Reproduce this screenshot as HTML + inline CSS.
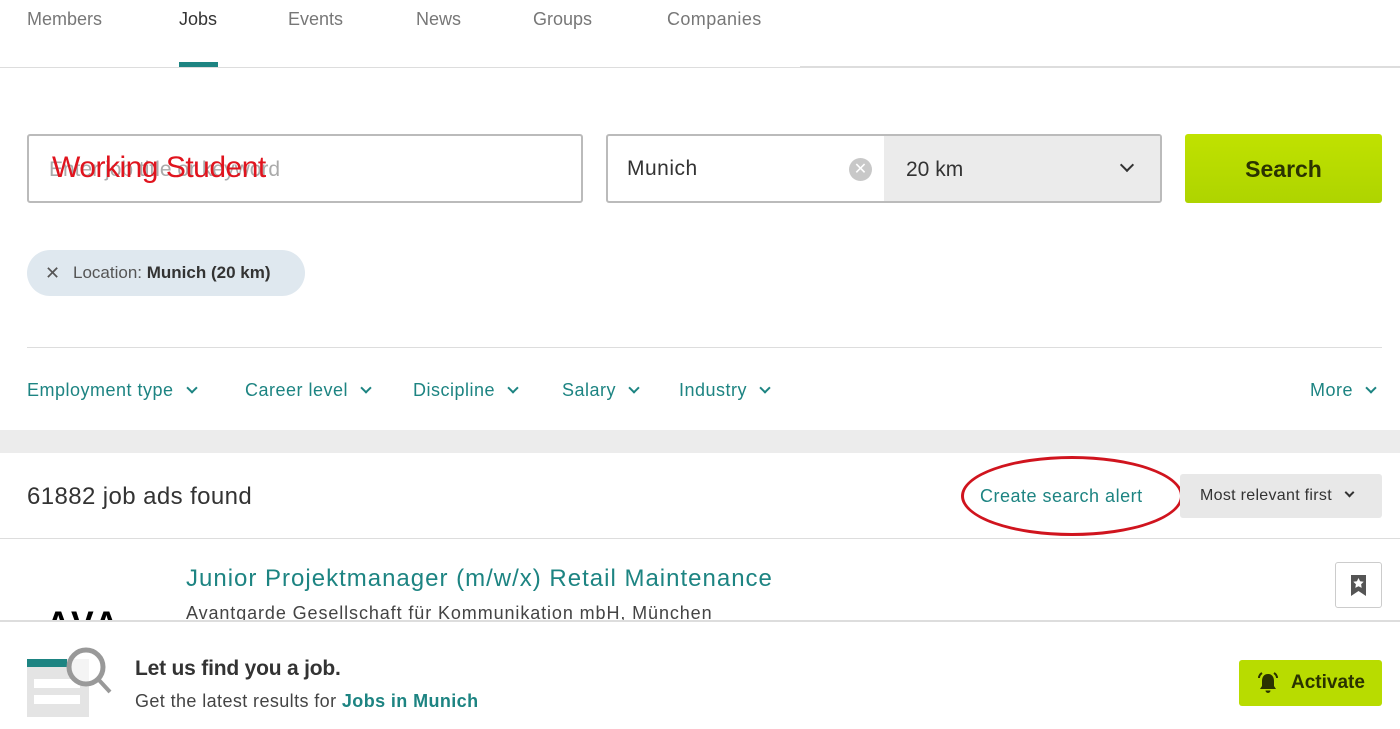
<!DOCTYPE html>
<html><head><meta charset="utf-8"><style>
*{margin:0;padding:0;box-sizing:border-box}
body{width:1400px;height:729px;overflow:hidden;background:#fff;font-family:"Liberation Sans",sans-serif;color:#333;position:relative}
.a{position:absolute;white-space:nowrap}
.tab{top:9px;font-size:18px;color:#777}
.teal{color:#1d8482}
.f{top:380px;font-size:18px;color:#1d8482}
.chev{display:inline-block;width:8px;height:8px;border-right:2px solid currentColor;border-bottom:2px solid currentColor;transform:rotate(45deg);margin-left:14px;position:relative;top:-4px}
</style></head><body>
<div class="a tab" style="left:27px">Members</div>
<div class="a tab" style="left:179px;color:#333">Jobs</div>
<div class="a" style="left:179px;top:62px;width:39px;height:5px;background:#1d8482"></div>
<div class="a tab" style="left:288px">Events</div>
<div class="a tab" style="left:416px">News</div>
<div class="a tab" style="left:533px">Groups</div>
<div class="a tab" style="left:667px;letter-spacing:.4px">Companies</div>
<div class="a" style="left:0;top:67px;width:800px;height:1px;background:#ddd"></div>
<div class="a" style="left:800px;top:66px;width:600px;height:2px;background:#ddd"></div>

<div class="a" style="left:27px;top:134px;width:556px;height:69px;border:2px solid #bbb;border-radius:3px"></div>
<div class="a" style="left:49px;top:158px;font-size:21px;color:#aaa">Enter job title or keyword</div>
<div class="a" style="left:52px;top:151px;font-size:30px;color:#e0141e;letter-spacing:-.5px">Working Student</div>

<div class="a" style="left:606px;top:134px;width:556px;height:69px;border:2px solid #bbb;border-radius:3px;overflow:hidden">
  <div class="a" style="left:276px;top:0;width:278px;height:67px;background:#ebebeb"></div>
</div>
<div class="a" style="left:627px;top:157px;font-size:21px;color:#333;letter-spacing:.5px">Munich</div>
<div class="a" style="left:849px;top:158px;width:23px;height:23px;border-radius:50%;background:#c8c8c8;color:#fff;font-size:16px;text-align:center;line-height:23px">✕</div>
<div class="a" style="left:906px;top:158px;font-size:21px;color:#333">20 km</div>
<div class="a" style="left:1122px;top:160px;width:10px;height:10px;border-right:2px solid #333;border-bottom:2px solid #333;transform:rotate(45deg)"></div>
<div class="a" style="left:1185px;top:134px;width:197px;height:69px;background:linear-gradient(#c0e200,#aed400);border-radius:3px;text-align:center;line-height:71px;font-size:23px;font-weight:bold;color:#2a3300">Search</div>

<div class="a" style="left:27px;top:250px;width:278px;height:46px;background:#dfe8ef;border-radius:23px"></div>
<div class="a" style="left:45px;top:263px;font-size:18px;color:#555">✕</div>
<div class="a" style="left:73px;top:263px;font-size:17px;color:#555">Location: <b style="color:#333">Munich (20 km)</b></div>

<div class="a" style="left:27px;top:347px;width:1355px;height:1px;background:#ddd"></div>
<div class="a f" style="left:27px;letter-spacing:.5px">Employment type<span class="chev"></span></div>
<div class="a f" style="left:245px;letter-spacing:.5px">Career level<span class="chev"></span></div>
<div class="a f" style="left:413px;letter-spacing:.5px">Discipline<span class="chev"></span></div>
<div class="a f" style="left:562px;letter-spacing:.5px">Salary<span class="chev"></span></div>
<div class="a f" style="left:679px;letter-spacing:.5px">Industry<span class="chev"></span></div>
<div class="a f" style="left:1310px;letter-spacing:.5px">More<span class="chev"></span></div>

<div class="a" style="left:0;top:430px;width:1400px;height:23px;background:#ececec"></div>
<div class="a" style="left:27px;top:483px;font-size:24px;color:#333;letter-spacing:.4px">61882 job ads found</div>
<div class="a" style="left:980px;top:486px;font-size:18px;color:#1d8482;letter-spacing:.5px">Create search alert</div>
<div class="a" style="left:961px;top:456px;width:222px;height:80px;border:3px solid #d0141e;border-radius:50%"></div>
<div class="a" style="left:1180px;top:474px;width:202px;height:44px;background:#e8e8e8;border-radius:3px"></div>
<div class="a" style="left:1200px;top:487px;font-size:16px;color:#333;letter-spacing:.3px">Most relevant first<span class="chev" style="width:7px;height:7px;margin-left:14px"></span></div>
<div class="a" style="left:0;top:538px;width:1400px;height:1px;background:#ddd"></div>

<div class="a" style="left:186px;top:565px;font-size:24px;color:#1d8482;letter-spacing:1px">Junior Projektmanager (m/w/x) Retail Maintenance</div>
<div class="a" style="left:186px;top:603px;font-size:18px;color:#444;letter-spacing:.9px">Avantgarde Gesellschaft für Kommunikation mbH, München</div>
<div class="a" style="left:46px;top:602px;font-size:34px;font-weight:bold;color:#000;letter-spacing:3px;overflow:hidden;height:18px;line-height:44px">AVA</div>
<div class="a" style="left:1335px;top:562px;width:47px;height:46px;border:1px solid #ccc;border-radius:3px;background:#fff">
<svg width="45" height="44" viewBox="0 0 45 44"><path d="M15 12h15v21l-7.5-5-7.5 5z" fill="#555"/><path d="M22.5 15l1.6 3.3 3.6.5-2.6 2.5.6 3.6-3.2-1.7-3.2 1.7.6-3.6-2.6-2.5 3.6-.5z" fill="#fff"/></svg></div>

<div class="a" style="left:0;top:620px;width:1400px;height:109px;background:#fff;border-top:2px solid #ddd"></div>
<svg class="a" style="left:24px;top:645px" width="90" height="75" viewBox="0 0 90 75">
<rect x="3" y="14" width="62" height="58" fill="#e4e4e4"/>
<rect x="3" y="14" width="40" height="8" fill="#1d8482"/>
<rect x="10" y="34" width="46" height="9" fill="#fff"/><rect x="10" y="50" width="46" height="9" fill="#fff"/>
<line x1="74" y1="34" x2="86" y2="47" stroke="#999" stroke-width="4"/>
<circle cx="62" cy="22" r="17" fill="#fff" fill-opacity=".6" stroke="#999" stroke-width="5"/>
</svg>
<div class="a" style="left:135px;top:657px;font-size:21px;color:#333;font-weight:bold;letter-spacing:-.2px">Let us find you a job.</div>
<div class="a" style="left:135px;top:691px;font-size:18px;color:#444;letter-spacing:.4px">Get the latest results for <span class="teal" style="font-weight:bold">Jobs in Munich</span></div>
<div class="a" style="left:1239px;top:660px;width:143px;height:46px;background:#b8dc00;border-radius:3px"></div>
<svg class="a" style="left:1256px;top:671px" width="24" height="24" viewBox="0 0 24 24"><path d="M12 3c-4 0-6 3-6 7v5l-2 3h16l-2-3v-5c0-4-2-7-6-7z M9.5 19.5a2.5 2.5 0 005 0z" fill="#2a3300"/><path d="M3 7q0-3 3-5M21 7q0-3-3-5" stroke="#2a3300" stroke-width="2" fill="none"/></svg>
<div class="a" style="left:1291px;top:672px;font-size:19px;font-weight:bold;color:#2a3300">Activate</div>
</body></html>
